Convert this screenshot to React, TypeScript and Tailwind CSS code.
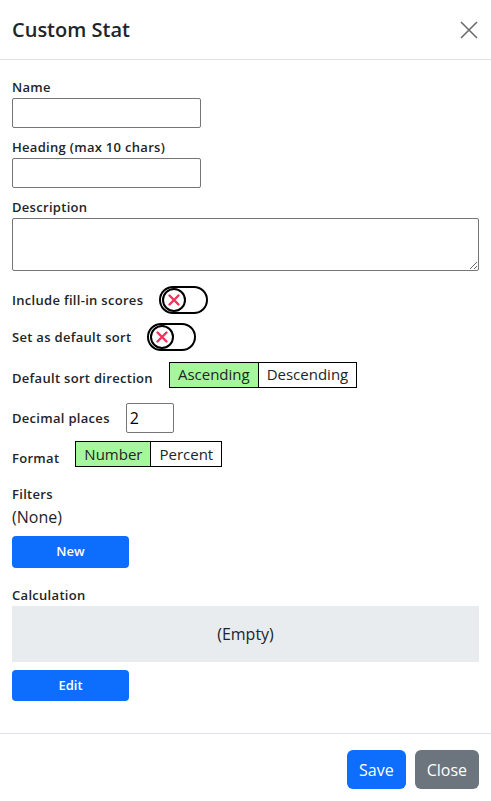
import React from 'react'

function Toggle() {
  return (
    <div className="w-[49px] h-[28px] rounded-full border-2 border-black flex items-center pl-[1px] bg-white">
      <div className="w-[24px] h-[24px] rounded-full border-2 border-black flex items-center justify-center">
        <svg width="14" height="14" viewBox="0 0 14 14">
          <path d="M2.5 2.5 L11.5 11.5 M11.5 2.5 L2.5 11.5" stroke="#f0325c" strokeWidth="2.4" strokeLinecap="round" />
        </svg>
      </div>
    </div>
  )
}

function Segmented({ options, active }: { options: string[]; active: number }) {
  return (
    <div className="flex">
      {options.map((o, i) => (
        <button
          key={o}
          className={
            'h-[26px] px-[8px] border border-black text-[15px] leading-none text-[#212529] ' +
            (i > 0 ? 'border-l-0 ' : '') +
            (i === active ? 'bg-[#a6f79c]' : 'bg-white')
          }
        >
          {o}
        </button>
      ))}
    </div>
  )
}

export default function App() {
  const label = 'text-[13px] font-semibold tracking-[0.3px] text-[#212529] leading-[20px]'
  return (
    <div className="min-h-screen bg-white text-[#212529]" style={{ fontFamily: '"Open Sans", sans-serif' }}>
      <header className="h-[60px] flex items-center justify-between px-3 border-b border-[#dee2e6]">
        <h1 className="text-[20px] font-semibold leading-none">Custom Stat</h1>
        <button className="w-[20px] h-[20px] flex items-center justify-center">
          <svg width="18" height="18" viewBox="0 0 18 18">
            <path d="M1 1 L17 17 M17 1 L1 17" stroke="#6b6b6b" strokeWidth="1.6" />
          </svg>
        </button>
      </header>

      <div className="px-3 pt-[17px] pb-[32px]">
        <div className={label}>Name</div>
        <input className="mt-[1px] w-[189px] h-[30px] border border-[#767676] rounded-[2px]" />

        <div className={label + ' mt-[9px]'}>Heading (max 10 chars)</div>
        <input className="mt-[1px] w-[189px] h-[30px] border border-[#767676] rounded-[2px]" />

        <div className={label + ' mt-[9px]'}>Description</div>
        <textarea className="mt-[1px] block w-full h-[53px] border border-[#767676] rounded-[2px]" />

        <div className="flex items-center gap-4 mt-[15px]">
          <span className={label}>Include fill-in scores</span>
          <Toggle />
        </div>

        <div className="flex items-center gap-4 mt-[9px]">
          <span className={label}>Set as default sort</span>
          <Toggle />
        </div>

        <div className="flex items-center gap-4 mt-[10px]">
          <span className={label + ' pt-[7px]'}>Default sort direction</span>
          <Segmented options={['Ascending', 'Descending']} active={0} />
        </div>

        <div className="flex items-center gap-4 mt-[15px]">
          <span className={label}>Decimal places</span>
          <input
            defaultValue="2"
            className="w-[48px] h-[30px] border border-[#767676] rounded-[2px] px-[3px] text-[16px] text-black"
          />
        </div>

        <div className="flex items-center gap-4 mt-[7px]">
          <span className={label + ' pt-[8px]'}>Format</span>
          <Segmented options={['Number', 'Percent']} active={0} />
        </div>

        <div className={label + ' mt-[16px]'}>Filters</div>
        <div className="text-[16px] leading-[24px] mt-[1px]">(None)</div>
        <button className="mt-[7px] w-[117px] h-[32px] rounded-[4px] bg-[#0d6efd] text-white text-[13px] font-semibold">
          New
        </button>

        <div className={label + ' mt-[17px]'}>Calculation</div>
        <div className="mt-[1px] h-[56px] bg-[#e9ecef] flex items-center justify-center text-[16px]">(Empty)</div>
        <button className="mt-[8px] w-[117px] h-[31px] rounded-[4px] bg-[#0d6efd] text-white text-[13px] font-semibold block">
          Edit
        </button>
      </div>

      <footer className="border-t border-[#dee2e6] flex justify-end gap-[9px] px-3 pt-[16px] pb-[12px]">
        <button className="h-[39px] px-[12px] rounded-[6px] bg-[#0d6efd] text-white text-[16px]">Save</button>
        <button className="h-[39px] px-[12px] rounded-[6px] bg-[#6c757d] text-white text-[16px]">Close</button>
      </footer>
    </div>
  )
}
